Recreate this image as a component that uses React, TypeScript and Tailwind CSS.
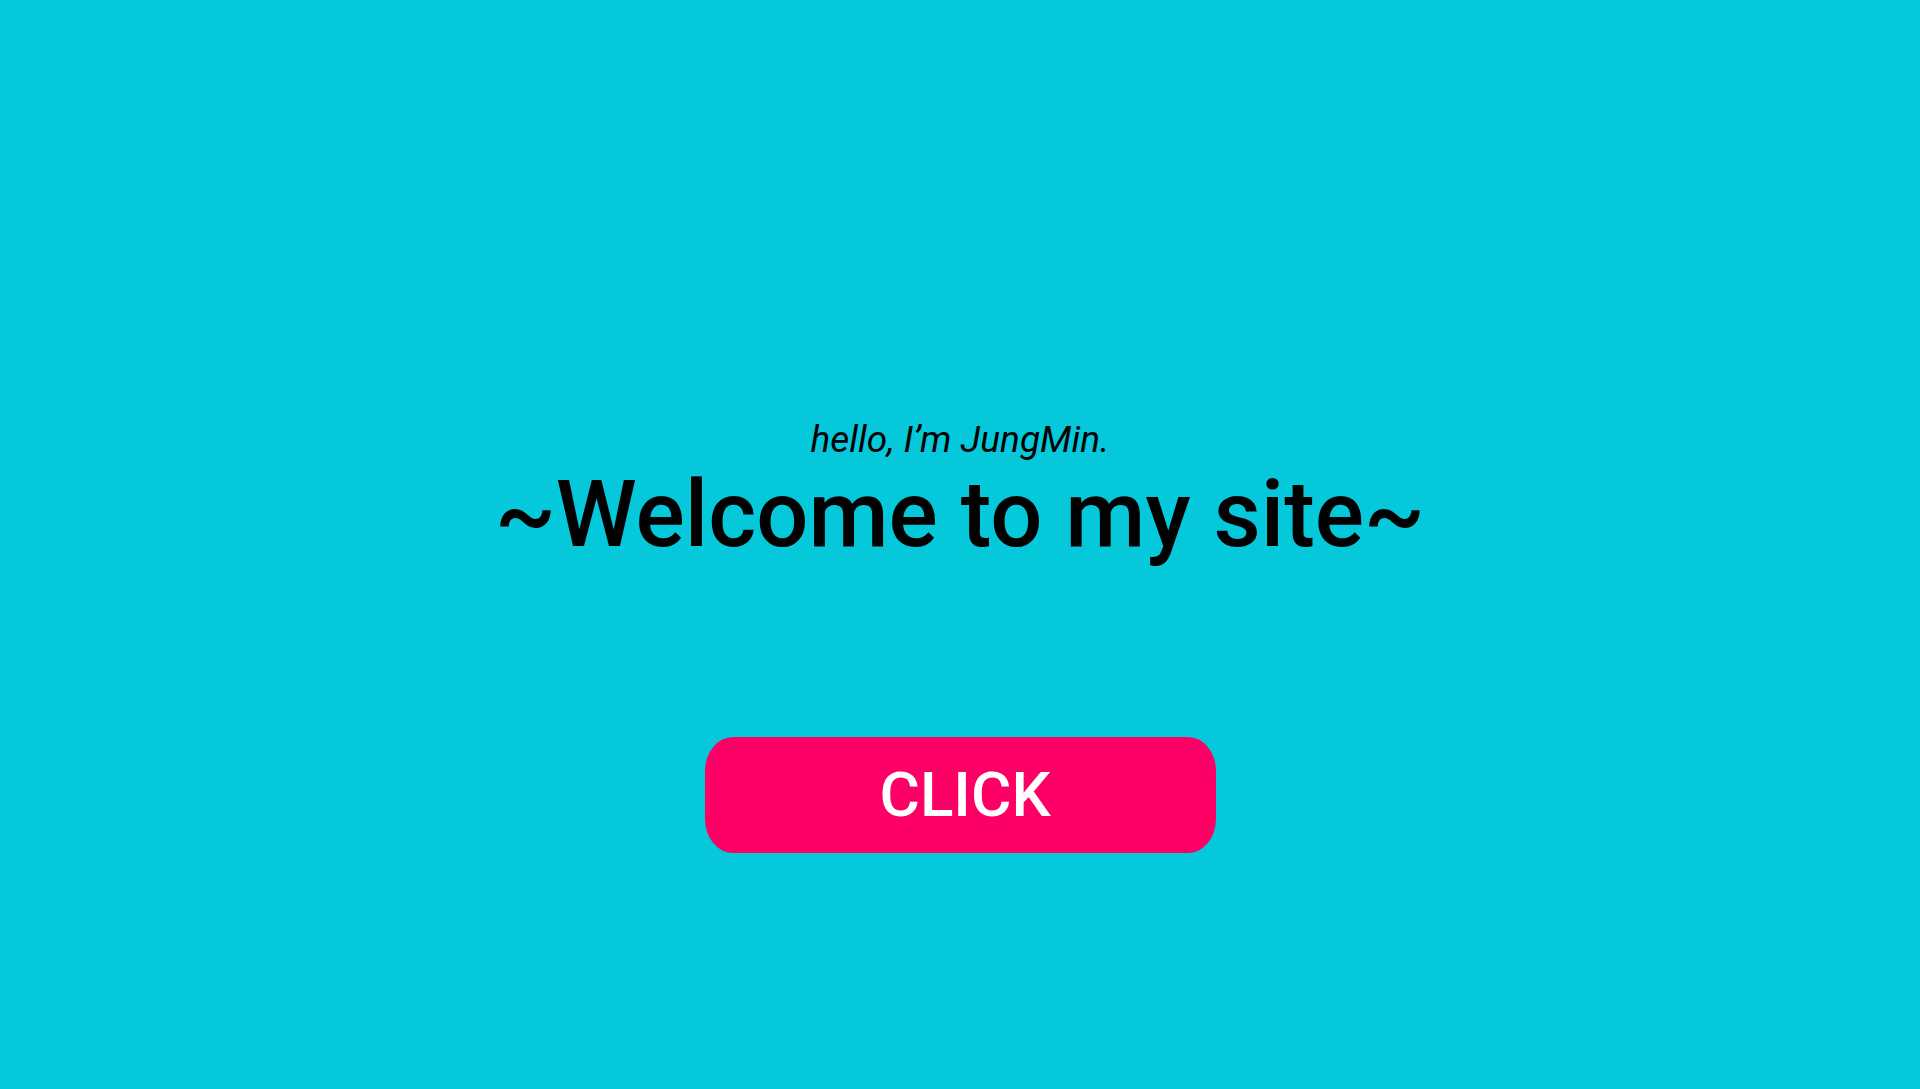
export default function App() {
  return (
    <div className="min-h-screen w-full bg-[#05c8db] flex flex-col items-center pt-[417px] font-['Roboto',sans-serif] text-black">
      <p className="text-[37px] leading-[45px] italic">hello, I’m JungMin.</p>
      <h1 className="mt-[7px] text-[92px] leading-[92px] font-medium">~Welcome to my site~</h1>
      <button className="mt-[176px] w-[511px] h-[116px] pl-[10px] rounded-[28px/34px] bg-[#fc0065] text-white text-[62px] font-medium leading-none">
        CLICK
      </button>
    </div>
  );
}
